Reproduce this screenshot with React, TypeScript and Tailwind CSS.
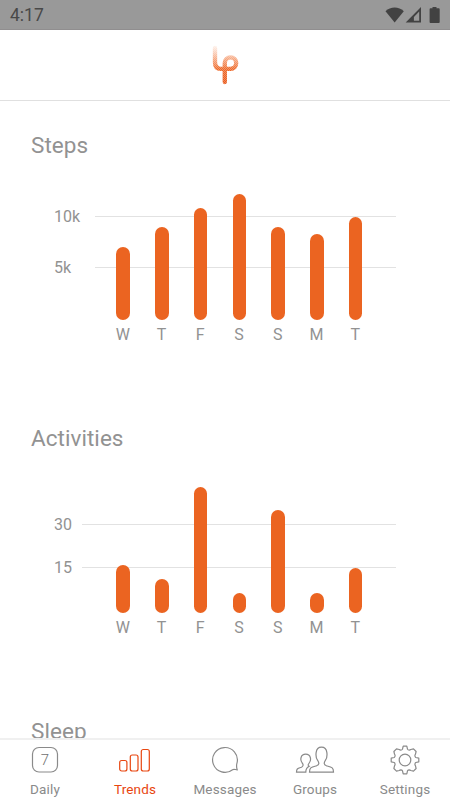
import React from "react";

type ChartData = {
  title: string;
  lineStart: string;
  lines: { label: string; bottom: number }[];
  bars: { day: string; height: number }[];
};

const charts: ChartData[] = [
  {
    title: "Steps",
    lineStart: "left-[95px]",
    lines: [
      { label: "10k", bottom: 103 },
      { label: "5k", bottom: 52 },
    ],
    bars: [
      { day: "W", height: 73 },
      { day: "T", height: 93.5 },
      { day: "F", height: 112.5 },
      { day: "S", height: 126 },
      { day: "S", height: 93.5 },
      { day: "M", height: 86 },
      { day: "T", height: 103.5 },
    ],
  },
  {
    title: "Activities",
    lineStart: "left-[82px]",
    lines: [
      { label: "30", bottom: 88 },
      { label: "15", bottom: 45 },
    ],
    bars: [
      { day: "W", height: 48.5 },
      { day: "T", height: 34.5 },
      { day: "F", height: 126 },
      { day: "S", height: 20 },
      { day: "S", height: 103.5 },
      { day: "M", height: 20 },
      { day: "T", height: 45.5 },
    ],
  },
  { title: "Sleep", lineStart: "left-[82px]", lines: [], bars: [] },
];

const StatusBar: React.FC = () => (
  <div className="flex h-[30px] shrink-0 items-center justify-between border-b border-[#908e8f] bg-[#999999] pl-[10px] pr-[9px]">
    <span className="pt-[2px] text-[17.5px] leading-none text-[#484848]">4:17</span>
    <svg width="56" height="18" viewBox="0 0 56 18" fill="#424242">
      <path d="M0.5 5.2C5.5.2 13.8.2 18.8 5.2L9.7 16.5z" />
      <path d="M36 1v15.5H20.7z" />
      <path d="M34.2 5.5v9.3h-5.3V11z" fill="#999999" />
      <path d="M47.5 1h4v1.3h2.3q.9 0 .9.9V16q0 1-.9 1h-8.3q-.9 0-.9-1V3.2q0-.9.9-.9h2z" />
    </svg>
  </div>
);

const Logo: React.FC = () => (
  <svg width="28" height="42" viewBox="0 0 28 42" fill="none">
    <defs>
      <linearGradient id="fade" x1="0" y1="2" x2="0" y2="40" gradientUnits="userSpaceOnUse">
        <stop offset="0" stopColor="#f8a57c" stopOpacity="0.15" />
        <stop offset="0.35" stopColor="#f4905f" stopOpacity="0.8" />
        <stop offset="0.6" stopColor="#ee6b2c" />
        <stop offset="1" stopColor="#e9591a" />
      </linearGradient>
      <pattern id="dots" width="2" height="2" patternUnits="userSpaceOnUse">
        <rect width="1" height="1" fill="#fff" fillOpacity="0.28" />
        <rect x="1" y="1" width="1" height="1" fill="#fff" fillOpacity="0.28" />
      </pattern>
    </defs>
    {["url(#fade)", "url(#dots)"].map((stroke) => (
      <path
        key={stroke}
        d="M4 4V18.5Q4 24.8 10 24.8H19.5A5.7 5.7 0 1 0 13.8 19.1V38"
        stroke={stroke}
        strokeWidth="4.3"
        strokeLinecap="round"
      />
    ))}
  </svg>
);

const Chart: React.FC<{ chart: ChartData }> = ({ chart }) => (
  <section className="h-[293px] shrink-0">
    <h2 className="h-[91px] pl-[31px] pt-[30px] text-[22.5px] font-normal leading-[28px] tracking-[0.05px] text-[#929292]">
      {chart.title}
    </h2>
    <div className="relative h-[128px] pl-[103.7px]">
      {chart.lines.map((line) => (
        <div key={line.label} className="absolute left-0 w-full" style={{ bottom: line.bottom }}>
          <span className="absolute bottom-[-10px] left-[54px] text-base leading-5 text-[#929292]">
            {line.label}
          </span>
          <div className={`absolute bottom-0 right-[54px] h-px bg-[#e2e2e2] ${chart.lineStart}`} />
        </div>
      ))}
      <div className="relative grid h-full w-[271.25px] grid-cols-7 items-end justify-items-center">
        {chart.bars.map((bar, index) => (
          <div key={index} className="w-[13.5px] rounded-full bg-[#eb6421]" style={{ height: bar.height }} />
        ))}
      </div>
    </div>
    <div className="ml-[103.4px] mt-[5px] grid w-[271.25px] grid-cols-7 text-center text-base leading-5 text-[#929292]">
      {chart.bars.map((bar, index) => (
        <span key={index}>{bar.day}</span>
      ))}
    </div>
  </section>
);

const icons = {
  daily: (
    <>
      <rect x="7.5" y="2.5" width="25" height="24.5" rx="6.5" />
      <text x="20" y="20.3" textAnchor="middle" fontSize="15" fill="#707070" stroke="none" className="font-light">
        7
      </text>
    </>
  ),
  trends: (
    <>
      <rect x="4.7" y="15.5" width="7.2" height="10.5" rx="2" />
      <rect x="15.3" y="10" width="7.7" height="16" rx="2" />
      <rect x="26.3" y="4.5" width="8" height="21.5" rx="2" />
    </>
  ),
  messages: (
    <path d="M27.6 24.7A12.4 12.4 0 1 1 32.1 17.6C31.3 20 31.5 22.6 32.2 24.8C30.6 24.9 29.1 23.6 27.6 24.7Z" />
  ),
  groups: (
    <>
      <path d="M14.5 27.2H38.5C38.5 22.5 37 22.3 31.5 20.8C28.5 19.7 28.8 17.7 30.5 15.2C32.5 12.2 33.5 2.2 26.5 2.2C19.5 2.2 20.5 12.2 22.5 15.2C24.3 17.8 24.5 19.7 21.5 20.8C16 22.3 14.5 22.5 14.5 27.2Z" />
      <path d="M10.8 27.2H1.5C1.5 23.5 2.5 23.5 6.5 22.2C8.5 21.2 8.5 19.5 7.2 18C4.8 15 5.5 9.2 10.7 9.2C15.9 9.2 16.6 15 14.2 18C13 19.5 12.7 20.3 14.2 21.2C11.5 22.5 10.8 24 10.8 27.2Z" />
    </>
  ),
  settings: (
    <>
      <circle cx="20" cy="15" r="5.8" />
      <path
        strokeLinejoin="round"
        d="M18.2 1.2H21.8L22.5 4.2Q23 5 24.3 5.1Q25 5.1 25.8 4.5L28.5 3.9L31.1 6.5L30.5 9.2Q29.9 10 29.9 10.7Q30 12 30.8 12.5L33.8 13.2V16.8L30.8 17.5Q30 18 29.9 19.3Q29.9 20 30.5 20.8L31.1 23.5L28.5 26.1L25.8 25.5Q25 24.9 24.3 24.9Q23 25 22.5 25.8L21.8 28.8H18.2L17.5 25.8Q17 25 15.7 24.9Q15 24.9 14.2 25.5L11.5 26.1L8.9 23.5L9.5 20.8Q10.1 20 10.1 19.3Q10 18 9.2 17.5L6.2 16.8V13.2L9.2 12.5Q10 12 10.1 10.7Q10.1 10 9.5 9.2L8.9 6.5L11.5 3.9L14.2 4.5Q15 5.1 15.7 5.1Q17 5 17.5 4.2Z"
      />
    </>
  ),
};

const tabs = [
  { label: "Daily", icon: icons.daily },
  { label: "Trends", icon: icons.trends, active: true },
  { label: "Messages", icon: icons.messages },
  { label: "Groups", icon: icons.groups },
  { label: "Settings", icon: icons.settings },
];

const App: React.FC = () => {
  return (
    <div className="flex h-[800px] w-[450px] flex-col overflow-hidden bg-white font-[Roboto,sans-serif]">
      <StatusBar />
      <header className="flex h-[71px] shrink-0 justify-center border-b border-[#e0e0e0] pt-[14px]">
        <Logo />
      </header>
      <main className="flex min-h-0 flex-1 flex-col overflow-hidden">
        {charts.map((chart) => (
          <Chart key={chart.title} chart={chart} />
        ))}
      </main>
      <nav className="grid h-[62px] shrink-0 grid-cols-5 border-t-2 border-[#f0f0f0] bg-white pt-[5px]">
        {tabs.map((tab) => (
          <div
            key={tab.label}
            className={`flex flex-col items-center ${tab.active ? "text-[#e84610]" : "text-[#8a8a8a]"}`}
          >
            <svg width="40" height="30" viewBox="0 0 40 30" fill="none" stroke="currentColor" strokeWidth="1.2">
              {tab.icon}
            </svg>
            <span className="mt-[5px] text-[13.5px] leading-[18px] tracking-[0.15px]">{tab.label}</span>
          </div>
        ))}
      </nav>
    </div>
  );
};

export default App;
